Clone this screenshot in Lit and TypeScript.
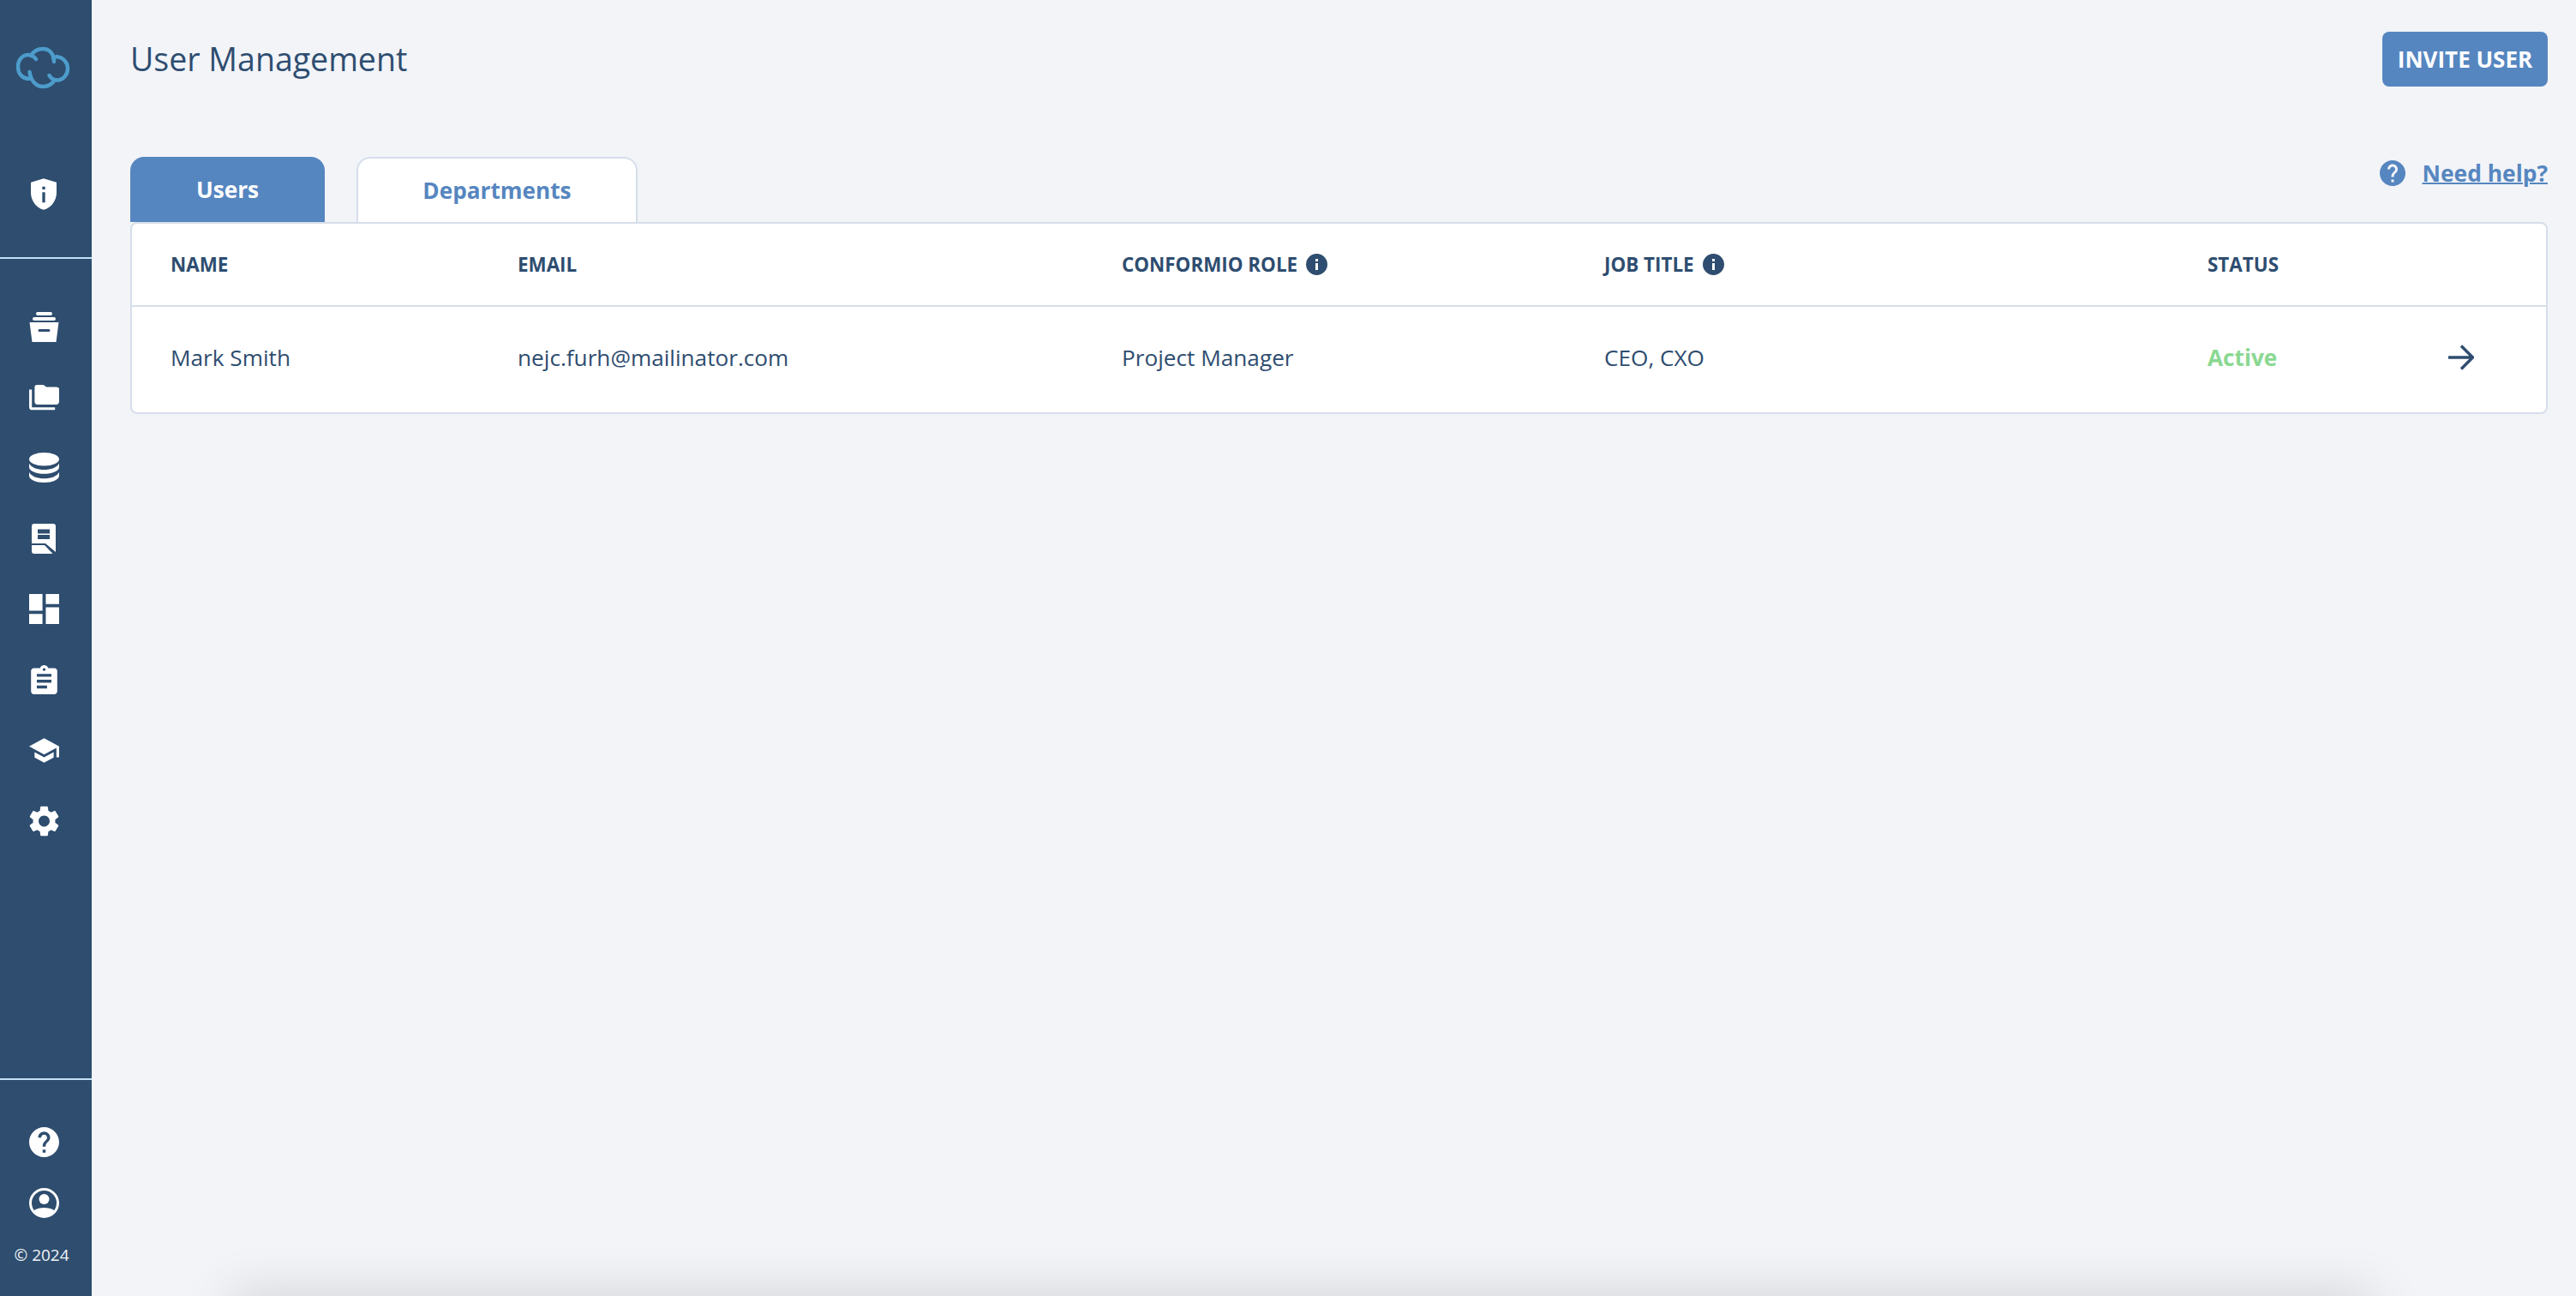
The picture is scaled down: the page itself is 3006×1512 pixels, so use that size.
import { LitElement, html, css, svg } from "lit";
import { customElement } from "lit/decorators.js";

const nav = [
  { w: 35, h: 35, vb: "0 0 35 35", body: svg`<rect x="8" y="0" width="19" height="4" rx="2"/><rect x="4" y="6" width="27" height="4" rx="2"/><path fill-rule="evenodd" d="M0.5 12H34.5L31.5 35H3.5ZM12 20a1.5 1.5 0 0 0 0 3h11a1.5 1.5 0 0 0 0-3Z"/>` },
  { w: 35, h: 30, vb: "1 3.5 22 18.9", body: svg`<path d="M3 20h17v2H3c-1.1 0-2-.9-2-2V7h2v13zM23 6v10c0 1.1-.9 2-2 2H7c-1.1 0-2-.9-2-2l.01-11c0-1.1.89-1.5 1.99-1.5h4c1 0 2 1 2.5 1.5h7.5c1.1 0 2 .9 2 1z"/>` },
  { w: 35, h: 35, vb: "0 0 35 35", body: svg`<ellipse cx="17.5" cy="7.7" rx="17.5" ry="7.7"/><path d="M0 12.5c2 5 10 7.5 17.5 7.5S33 17.500 35 12.500V17c0 4.500-8 7.800-17.500 7.800S0 21.500 0 17Z"/><path d="M0 22.700c2 5 10 7.500 17.500 7.500S33 27.700 35 22.700V27c0 4.500-8 8-17.500 8S0 31.500 0 27Z"/>` },
  { w: 28, h: 35, vb: "0 0 28 35", body: svg`<path fill-rule="evenodd" d="M3 0H25a3 3 0 0 1 3 3V33L16 23H0V3a3 3 0 0 1 3-3ZM7 6.500V11.500H21V6.500ZM7 13V18H21V13Z"/><path d="M0 25H15L24.500 35H3a3 3 0 0 1-3-3Z"/>` },
  { w: 35, h: 35, vb: "3 3 18 18", body: svg`<path d="M3 13h8V3H3v10zm0 8h8v-6H3v6zm10 0h8V11h-8v10zm0-18v6h8V3h-8z"/>` },
  { w: 31, h: 34, vb: "3 1 18 20", body: svg`<path d="M19 3h-4.180C14.400 1.840 13.300 1 12 1c-1.300 0-2.400.840-2.820 2H5c-1.100 0-2 .900-2 2v14c0 1.100.900 2 2 2h14c1.100 0 2-.900 2-2V5c0-1.100-.900-2-2-2zm-7 0c.550 0 1 .450 1 1s-.450 1-1 1-1-.450-1-1 .450-1 1-1zm2 14H7v-2h7v2zm3-4H7v-2h10v2zm0-4H7V7h10v2z"/>` },
  { w: 35, h: 29, vb: "1 3 22 18", body: svg`<path d="M5 13.180v4L12 21l7-3.820v-4L12 17l-7-3.820zM12 3L1 9l11 6 9-4.910V17h2V9L12 3z"/>` },
  { w: 35, h: 36, vb: "2.500 2 19 20", body: svg`<path d="M19.140 12.940c.040-.300.060-.610.060-.940 0-.320-.020-.640-.070-.940l2.030-1.580c.180-.140.230-.410.120-.610l-1.920-3.320c-.120-.220-.370-.290-.590-.220l-2.390.960c-.500-.380-1.030-.700-1.620-.940l-.360-2.540c-.040-.240-.240-.410-.480-.410h-3.840c-.240 0-.430.170-.470.410l-.360 2.540c-.590.240-1.130.570-1.620.940l-2.390-.960c-.220-.080-.470 0-.590.220L2.740 8.870c-.120.210-.080.470.120.610l2.030 1.580c-.050.300-.090.630-.090.940s.020.640.070.940l-2.030 1.580c-.180.140-.230.410-.120.610l1.920 3.320c.120.220.370.290.590.220l2.390-.960c.500.380 1.030.700 1.620.940l.360 2.540c.050.240.240.410.480.410h3.840c.240 0 .440-.170.470-.410l.360-2.540c.590-.240 1.130-.560 1.620-.940l2.390.960c.220.080.470 0 .590-.220l1.920-3.320c.120-.220.070-.470-.120-.610l-2.010-1.580zM12 15.600c-1.980 0-3.600-1.620-3.600-3.600s1.620-3.600 3.600-3.600 3.600 1.620 3.600 3.600-1.620 3.600-3.600 3.600z"/>` },
];

const helpPath = "M12 2C6.480 2 2 6.480 2 12s4.480 10 10 10 10-4.480 10-10S17.520 2 12 2zm1 17h-2v-2h2v2zm2.070-7.750l-.900.920C13.450 12.900 13 13.500 13 15h-2v-.500c0-1.100.450-2.100 1.170-2.830l1.240-1.260c.370-.360.590-.860.590-1.410 0-1.100-.900-2-2-2s-2 .900-2 2H8c0-2.210 1.790-4 4-4s4 1.790 4 4c0 .880-.360 1.680-.930 2.250z";

const infoIcon = html`<svg class="info" viewBox="0 0 25 25"><path fill-rule="evenodd" d="M12.500 0a12.500 12.500 0 1 0 0 25a12.500 12.500 0 0 0 0-25ZM11 6h3v3h-3ZM11 11h3v8h-3Z"/></svg>`;

@customElement("app-root")
export class AppRoot extends LitElement {
  static styles = css`
    :host {
      display: flex;
      width: 100%;
      height: 100vh;
      overflow: hidden;
      position: relative;
      background: #f2f4f8;
      color: #2e4d70;
      font-family: "Open Sans", sans-serif;
    }
    .side {
      flex: 0 0 107px;
      min-width: 0;
      box-sizing: border-box;
      padding-right: 5px;
      background: #2e4d6f;
      display: flex;
      flex-direction: column;
      align-items: center;
      color: #fff;
    }
    .logo { margin-top: 54px; margin-left: -2px; height: 50px; }
    .shield { margin-top: 104px; height: 37px; display: block; }
    .rule { width: 107px; height: 2px; background: #c4e0f4; flex: none; align-self: flex-start; }
    .rule.top { margin-top: 55px; }
    .items {
      margin-top: 38px;
      display: flex;
      flex-direction: column;
      align-items: center;
    }
    .item {
      height: 82.4px;
      display: flex;
      align-items: center;
      justify-content: center;
    }
    .item svg, .foot svg, .shield { fill: #fff; display: block; }
    .spacer { flex: 1; }
    .foot {
      margin-top: 55px;
      display: flex;
      flex-direction: column;
      align-items: center;
      gap: 36px;
    }
    .copy {
      font-size: 19px;
      line-height: 26px;
      margin-top: 30px;
      margin-bottom: 35px;
      margin-left: -5px;
      color: #f1f4f8;
      white-space: nowrap;
    }
    .main {
      flex: 1;
      min-width: 0;
      padding: 37px 33px 0 45px;
      display: flex;
      flex-direction: column;
    }
    .head {
      display: flex;
      justify-content: space-between;
      align-items: center;
      height: 64px;
    }
    h1 {
      margin: 0;
      font-size: 37.5px;
      font-weight: 400;
      line-height: 64px;
    }
    .invite {
      width: 193px;
      height: 64px;
      border: 0;
      border-radius: 8px;
      background: #5686c0;
      color: #fff;
      font: 700 26px "Open Sans", sans-serif;
      padding: 0;
    }
    .tabrow {
      display: flex;
      justify-content: space-between;
      margin-top: 82px;
      height: 76px;
    }
    .tabs { display: flex; gap: 37px; }
    .tab {
      box-sizing: border-box;
      height: 76px;
      border-radius: 16px 16px 0 0;
      display: flex;
      align-items: center;
      justify-content: center;
      font-size: 26.2px;
      font-weight: 700;
    }
    .tab.on { width: 227px; background: #5686c0; color: #fff; }
    .tab.off {
      width: 328px;
      background: #fff;
      color: #5686c0;
      border: 2px solid #d6deea;
      border-bottom: 0;
    }
    .help {
      display: flex;
      align-items: center;
      gap: 19px;
      height: 32px;
      margin-top: 3px;
      color: #5686c0;
      font-size: 26.4px;
      font-weight: 700;
      text-decoration: underline;
      text-decoration-thickness: 2px;
    }
    .help svg { width: 36px; height: 36px; fill: #5686c0; display: block; margin: -2px -2.500px; }
    .table {
      box-sizing: border-box;
      height: 224px;
      background: #fff;
      border: 2px solid #d6deea;
      border-radius: 8px;
    }
    .row {
      display: grid;
      grid-template-columns: 405px 705px 563px 704px 1fr;
      padding-left: 45px;
      align-items: center;
    }
    .row.h {
      height: 95px;
      border-bottom: 2px solid #d6deea;
      font-size: 22.4px;
      font-weight: 700;
    }
    .row.b { box-sizing: border-box; height: 123px; padding-bottom: 5px; font-size: 26.2px; }
    .cell { display: flex; align-items: center; gap: 10px; white-space: nowrap; }
    .info { width: 25px; height: 25px; fill: #2e4d70; display: block; }
    .status { display: flex; justify-content: space-between; padding-right: 84px; align-items: center; }
    .active { color: #8ad891; font-weight: 700; }
    .arrow { width: 30px; height: 30px; stroke: #2e4d70; stroke-width: 3.5; fill: none; display: block; }
    .shadow {
      position: absolute;
      left: 270px;
      right: 236px;
      top: 100%;
      height: 40px;
      box-shadow: 0 0 60px rgba(0, 0, 0, 0.17);
    }
  `;

  render() {
    return html`
      <aside class="side">
        <svg class="logo" width="64" height="50" viewBox="18 54 64 50" fill="none" stroke="#4d9ccb" stroke-width="4.500" stroke-linecap="round">
          <path d="M42 69C39 65 36 64 33 64C26 64 21 70 21 78C21 86 26 91 33 92L36 91"/>
          <path d="M34.500 84C36 94 42 101 50 101C56 101 61 98 64 93"/>
          <path d="M57.500 88C60 92 64 94 68 93.500C74 93 79 87 79 80C79 73 74 67 66 66L62 68"/>
          <path d="M63 72C63 62 57 57 50 57C44 57 39 60 36 65"/>
        </svg>
        <svg class="shield" width="30" height="37" viewBox="3 1 18 22"><path fill-rule="evenodd" d="M12 1L3 3.800v7.200c0 5.550 3.840 10.740 9 12 5.160-1.260 9-6.450 9-12V3.800L12 1zM11 6.700h2v2h-2zM11 10.600h2v7.200h-2z"/></svg>
        <div class="rule top"></div>
        <div class="items">
          ${nav.map(
            (n) => html`<div class="item"><svg width=${n.w} height=${n.h} viewBox=${n.vb}>${n.body}</svg></div>`
          )}
        </div>
        <div class="spacer"></div>
        <div class="rule"></div>
        <div class="foot">
          <svg width="35" height="35" viewBox="2 2 20 20"><path d=${helpPath} /></svg>
          <svg width="35" height="35" viewBox="0 0 35 35">
            <circle cx="17.500" cy="17.500" r="16" fill="none" stroke="#fff" stroke-width="3"/>
            <circle cx="17.500" cy="13" r="6"/>
            <path d="M5.500 26C9 24 13 23 17.500 23S26 24 29.500 26C26.500 30.500 22 33 17.500 33S8.500 30.500 5.500 26Z"/>
          </svg>
        </div>
        <div class="copy">© 2024</div>
      </aside>
      <main class="main">
        <div class="head">
          <h1>User Management</h1>
          <button class="invite">INVITE USER</button>
        </div>
        <div class="tabrow">
          <div class="tabs">
            <div class="tab on">Users</div>
            <div class="tab off">Departments</div>
          </div>
          <div class="help">
            <svg viewBox="0 0 24 24"><path d=${helpPath} /></svg>
            <span>Need help?</span>
          </div>
        </div>
        <div class="table">
          <div class="row h">
            <div class="cell">NAME</div>
            <div class="cell">EMAIL</div>
            <div class="cell">CONFORMIO ROLE ${infoIcon}</div>
            <div class="cell">JOB TITLE ${infoIcon}</div>
            <div class="cell">STATUS</div>
          </div>
          <div class="row b">
            <div class="cell">Mark Smith</div>
            <div class="cell">nejc.furh@mailinator.com</div>
            <div class="cell">Project Manager</div>
            <div class="cell">CEO, CXO</div>
            <div class="status">
              <span class="active">Active</span>
              <svg class="arrow" viewBox="0 0 30 30"><path d="M0 15H29M15 1.500L28.500 15L15 28.500"/></svg>
            </div>
          </div>
        </div>
      </main>
      <div class="shadow"></div>
    `;
  }
}
